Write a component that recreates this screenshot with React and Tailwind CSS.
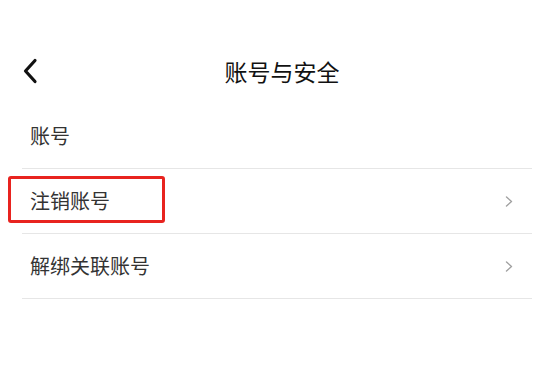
const ROWS = [
  { label: '账号', arrow: false },
  { label: '注销账号', arrow: true, marked: true },
  { label: '解绑关联账号', arrow: true },
];

const Header = () => (
  <div className="relative flex h-[66px] items-center justify-center">
    <button type="button" className="absolute left-[18px] top-1/2 -translate-y-1/2 p-1" aria-label="返回">
      <svg width="16" height="26" viewBox="0 0 16 26" fill="none">
        <path d="M13 2.5L3.5 13L13 23.5" stroke="#111" strokeWidth="3.2" strokeLinecap="round" strokeLinejoin="round" />
      </svg>
    </button>
    <h1 className="pl-[10px] text-[23px] font-normal text-[#111]">账号与安全</h1>
  </div>
);

const Row = ({ label, arrow, marked }) => (
  <div className="relative mx-[22px] flex h-[65px] items-center justify-between border-b border-[#e6e6e6]">
    <span className="pl-[8px] text-[20px] text-[#333]">{label}</span>
    {arrow && (
      <svg width="8" height="11" viewBox="0 0 8 11" fill="none" className="mr-[19px]">
        <path d="M1.5 1L6.5 5.5L1.5 10" stroke="#a0a0a0" strokeWidth="1.4" strokeLinecap="round" strokeLinejoin="round" />
      </svg>
    )}
    {marked && (
      <div className="absolute left-[-14px] top-[7px] h-[47px] w-[157px] rounded-[3px] border-[3.5px] border-[#e8231f]" />
    )}
  </div>
);

export default function App() {
  return (
    <div
      className="h-[373px] w-[554px] overflow-hidden bg-white pt-[38px]"
      style={{ fontFamily: '"Noto Sans CJK SC", "Noto Sans", sans-serif' }}
    >
      <Header />
      <div>
        {ROWS.map((row) => (
          <Row key={row.label} {...row} />
        ))}
      </div>
    </div>
  );
}
